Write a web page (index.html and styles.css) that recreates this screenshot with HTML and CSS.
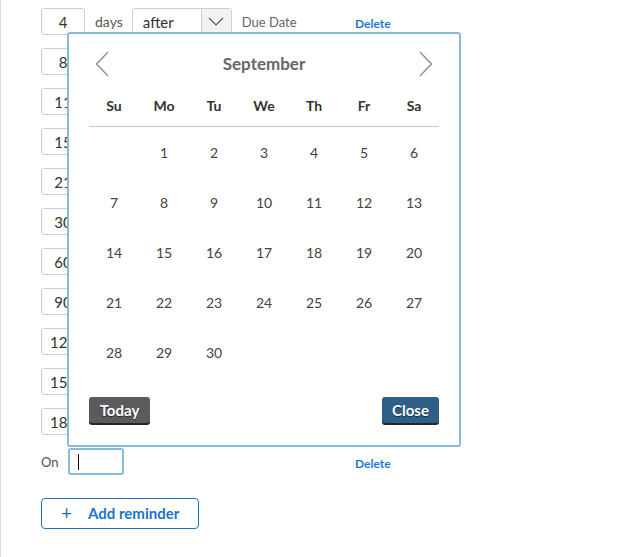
FILE: index.html
```html
<!DOCTYPE html>
<html>
<head>
<meta charset="utf-8">
<link rel="stylesheet" href="styles.css">
</head>
<body>
<div class="page">
  <div class="rows">
    <div class="row"><div class="main"><span class="num">4</span><span class="lbl">days</span><span class="sel"><span class="sel-text">after</span><span class="sel-btn"><svg width="16" height="9" viewBox="0 0 16 9"><path d="M1 1 L8 8 L15 1" fill="none" stroke="#555" stroke-width="1.2"/></svg></span></span><span class="due">Due Date</span></div><a class="del">Delete</a></div>
    <div class="row"><div class="main"><span class="num">8</span></div></div>
    <div class="row"><div class="main"><span class="num">11</span></div></div>
    <div class="row"><div class="main"><span class="num">15</span></div></div>
    <div class="row"><div class="main"><span class="num">21</span></div></div>
    <div class="row"><div class="main"><span class="num">30</span></div></div>
    <div class="row"><div class="main"><span class="num">60</span></div></div>
    <div class="row"><div class="main"><span class="num">90</span></div></div>
    <div class="row"><div class="main"><span class="num">120</span></div></div>
    <div class="row"><div class="main"><span class="num">150</span></div></div>
    <div class="row"><div class="main"><span class="num">180</span></div></div>
    <div class="row on-row"><div class="main"><span class="on">On</span><span class="date-input"><span class="caret"></span></span></div><a class="del">Delete</a></div>
  </div>
  <button class="add"><span class="plus">+</span><span>Add reminder</span></button>

  <div class="picker">
    <div class="head">
      <svg class="chev" width="14" height="26" viewBox="0 0 14 26"><path d="M13 1 L1.5 13 L13 25" fill="none" stroke="#8a8a8a" stroke-width="1.3"/></svg>
      <span class="month">September</span>
      <svg class="chev" width="14" height="26" viewBox="0 0 14 26"><path d="M1 1 L12.5 13 L1 25" fill="none" stroke="#8a8a8a" stroke-width="1.3"/></svg>
    </div>
    <div class="wk"><span>Su</span><span>Mo</span><span>Tu</span><span>We</span><span>Th</span><span>Fr</span><span>Sa</span></div>
    <div class="days">
      <span></span><span>1</span><span>2</span><span>3</span><span>4</span><span>5</span><span>6</span>
      <span>7</span><span>8</span><span>9</span><span>10</span><span>11</span><span>12</span><span>13</span>
      <span>14</span><span>15</span><span>16</span><span>17</span><span>18</span><span>19</span><span>20</span>
      <span>21</span><span>22</span><span>23</span><span>24</span><span>25</span><span>26</span><span>27</span>
      <span>28</span><span>29</span><span>30</span><span></span><span></span><span></span><span></span>
    </div>
    <div class="btns">
      <button class="today">Today</button>
      <button class="close">Close</button>
    </div>
  </div>
</div>
</body>
</html>
```
FILE: styles.css
```css
html, body {
  margin: 0;
  padding: 0;
  background: #fff;
}
body {
  font-family: "Source Sans Pro", Lato, "Liberation Sans", sans-serif;
  color: #333;
}
.page {
  position: relative;
  height: 557px;
  border-left: 1px solid #dcdcdc;
  padding: 8px 0 0 40px;
  box-sizing: border-box;
}
.rows {
  display: flex;
  flex-direction: column;
  gap: 13px;
}
.row {
  display: grid;
  grid-template-columns: 304px auto;
  column-gap: 10px;
  align-items: center;
  height: 27px;
}
.main {
  display: flex;
  align-items: center;
  gap: 10px;
  height: 27px;
}
.num {
  width: 44px;
  height: 27px;
  box-sizing: border-box;
  border: 1px solid #cfcfcf;
  border-radius: 3px;
  display: flex;
  align-items: center;
  justify-content: center;
  font-size: 15px;
  color: #333;
}
.lbl {
  font-size: 14px;
  color: #555;
  margin-right: -1px;
}
.sel {
  width: 100px;
  height: 27px;
  box-sizing: border-box;
  border: 1px solid #cfcfcf;
  border-radius: 3px;
  display: flex;
  align-items: center;
}
.sel-text {
  flex: 1;
  padding-left: 10px;
  font-size: 15px;
  color: #333;
}
.sel-btn {
  width: 29px;
  height: 25px;
  border-left: 1px solid #cfcfcf;
  background: #f2f2f2;
  display: flex;
  align-items: center;
  justify-content: center;
}
.due {
  font-size: 13px;
  color: #666;
}
.del {
  font-size: 12px;
  font-weight: bold;
  color: #1b7ad3;
  cursor: pointer;
  padding-top: 3px;
}
.on {
  font-size: 13px;
  color: #555;
  width: 17px;
}
.date-input {
  width: 56px;
  height: 27px;
  box-sizing: border-box;
  border: 2px solid #86bcd7;
  border-radius: 3px;
  display: flex;
  align-items: center;
  padding-left: 8px;
}
.caret {
  width: 1px;
  height: 16px;
  background: #111;
}
.add {
  margin-top: 23px;
  width: 158px;
  height: 31px;
  border: 1px solid #1b74c8;
  border-radius: 4px;
  background: #fff;
  color: #1b74c8;
  font-family: inherit;
  font-size: 15px;
  font-weight: bold;
  display: flex;
  align-items: center;
  padding: 0 0 2px 19px;
  gap: 16px;
}
.plus {
  font-size: 19px;
  font-weight: normal;
  line-height: 1;
}
.picker {
  position: absolute;
  left: 66px;
  top: 32px;
  width: 394px;
  height: 415px;
  box-sizing: border-box;
  border: 2px solid #86bcd7;
  border-radius: 3px;
  background: #fff;
  padding: 16px 20px 0 20px;
}
.head {
  display: flex;
  align-items: center;
  justify-content: space-between;
  height: 28px;
  padding: 0 6px;
}
.month {
  font-size: 17px;
  font-weight: bold;
  color: #666;
  margin-top: -2px;
}
.wk {
  display: grid;
  grid-template-columns: repeat(7, 50px);
  height: 41px;
  margin-top: 8px;
  align-items: center;
  border-bottom: 1px solid #c8c8c8;
  box-sizing: border-box;
}
.wk span {
  text-align: center;
  font-size: 14px;
  font-weight: bold;
  color: #333;
  padding-bottom: 1px;
}
.days {
  display: grid;
  grid-template-columns: repeat(7, 50px);
  grid-auto-rows: 50px;
  align-items: center;
}
.days span {
  text-align: center;
  font-size: 14px;
  color: #444;
}
.btns {
  display: flex;
  justify-content: space-between;
  margin-top: 20px;
}
.btns button {
  height: 26px;
  border: none;
  border-radius: 3px;
  color: #fff;
  font-family: inherit;
  font-size: 15px;
  font-weight: bold;
  text-shadow: 0 1px 1px rgba(0,0,0,0.6);
  box-shadow: 0 2px 0 #262626;
  padding: 0 8px 1px;
}
.today {
  width: 61px;
  background: #5b5b5d;
}
.close {
  width: 57px;
  background: #2f5f86;
}
```
